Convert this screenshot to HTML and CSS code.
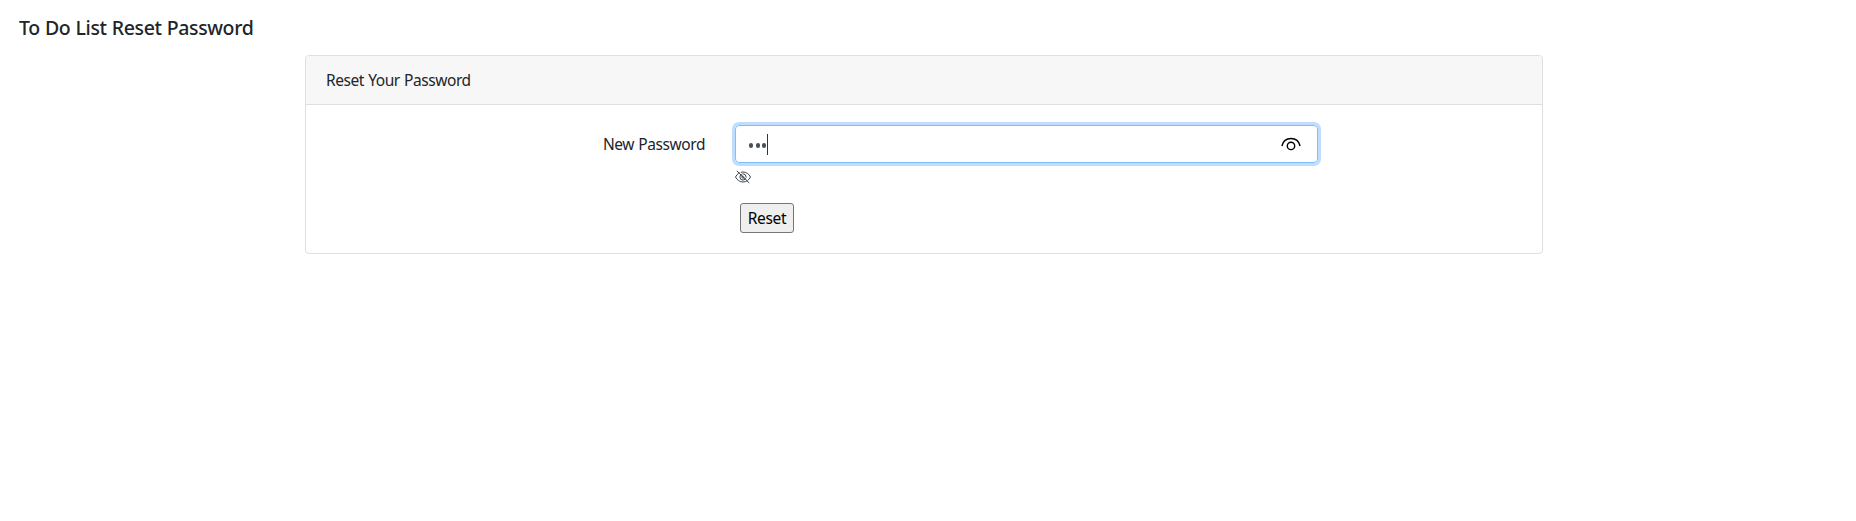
FILE: index.html
```html
<!DOCTYPE html>
<html lang="en">
<head>
<meta charset="utf-8">
<title>Reset Password</title>
<link rel="stylesheet" href="styles.css">
</head>
<body>
<h5 class="title"><span>To Do List Reset Password</span></h5>
<main class="card">
  <header class="card-header"><span>Reset Your Password</span></header>
  <form class="card-body">
    <label class="label"><span>New Password</span></label>
    <div class="field">
      <div class="control">
        <span class="dots"><i></i><i></i><i></i></span><span class="caret"></span>
        <svg class="reveal" width="20" height="14" viewBox="0 0 20 14" fill="none" stroke="#000" stroke-width="1.4"><path d="M.9 9C2 4.200 5.500 1.500 10 1.500S18 4.200 19.100 9"/><circle cx="10" cy="8.900" r="3.700"/></svg>
      </div>
      <svg class="eye-off" width="16" height="14" viewBox="0 0 16 14" fill="none" stroke="#40464c" stroke-width="1"><path d="M.5 7C2 4 4.700 2 8 2s6 2 7.500 5C14 10 11.300 12 8 12S2 10 .5 7Z"/><circle cx="8" cy="7" r="3.100"/><circle cx="8" cy="7" r="1.200"/><path stroke="#fff" d="M3 .2l12 12"/><path d="M1.800 .8l12.500 12.200"/></svg>
      <button class="button" type="button"><span>Reset</span></button>
    </div>
  </form>
</main>
</body>
</html>
```
FILE: styles.css
```css
* { box-sizing: border-box; }
body {
  margin: 0;
  padding: 16px 19px 0;
  background: #fff;
  color: #212529;
  font: 400 15.5px/24px "Noto Sans", "Open Sans", sans-serif;
  letter-spacing: -0.42px;
  word-spacing: 0.5px;
}
.title {
  margin: 0 0 15px;
  font-size: 19.500px;
  font-weight: 500;
  line-height: 24px;
  letter-spacing: -0.38px;
}
.card {
  width: 1238px;
  height: 199px;
  margin-left: 286px;
  border: 1px solid #dfdfdf;
  border-radius: 4px;
}
.card-header {
  height: 49px;
  padding: 12px 20px;
  background: #f7f7f7;
  border-bottom: 1px solid #dfdfdf;
  border-radius: 3px 3px 0 0;
}
.card-body {
  display: flex;
  gap: 30px;
  padding-top: 20px;
}
.label {
  width: 399px;
  padding-top: 7px;
  text-align: right;
}
.field {
  display: flex;
  flex-direction: column;
  align-items: flex-start;
  width: 583px;
}
.control {
  display: flex;
  align-items: center;
  width: 583px;
  height: 38px;
  padding: 0 16px 0 13px;
  border: 1px solid #80bdff;
  border-radius: 4px;
  box-shadow: 0 0 0 3px #bfdeff;
}
.dots { display: flex; gap: 2.400px; margin-top: 3px; }
.dots i { width: 4.200px; height: 4.200px; border-radius: 50%; background: #495057; }
.caret { width: 1px; height: 21px; margin-left: 1px; background: #30363c; }
.reveal { margin-left: auto; }
.eye-off { margin-top: 7px; }
.button {
  width: 54px;
  height: 30px;
  margin: 19px 0 0 5px;
  padding: 0;
  border: 1px solid #767676;
  border-radius: 3px;
  background: #efefef;
  color: #000;
  font: inherit;
  letter-spacing: -0.3px;
}
```
